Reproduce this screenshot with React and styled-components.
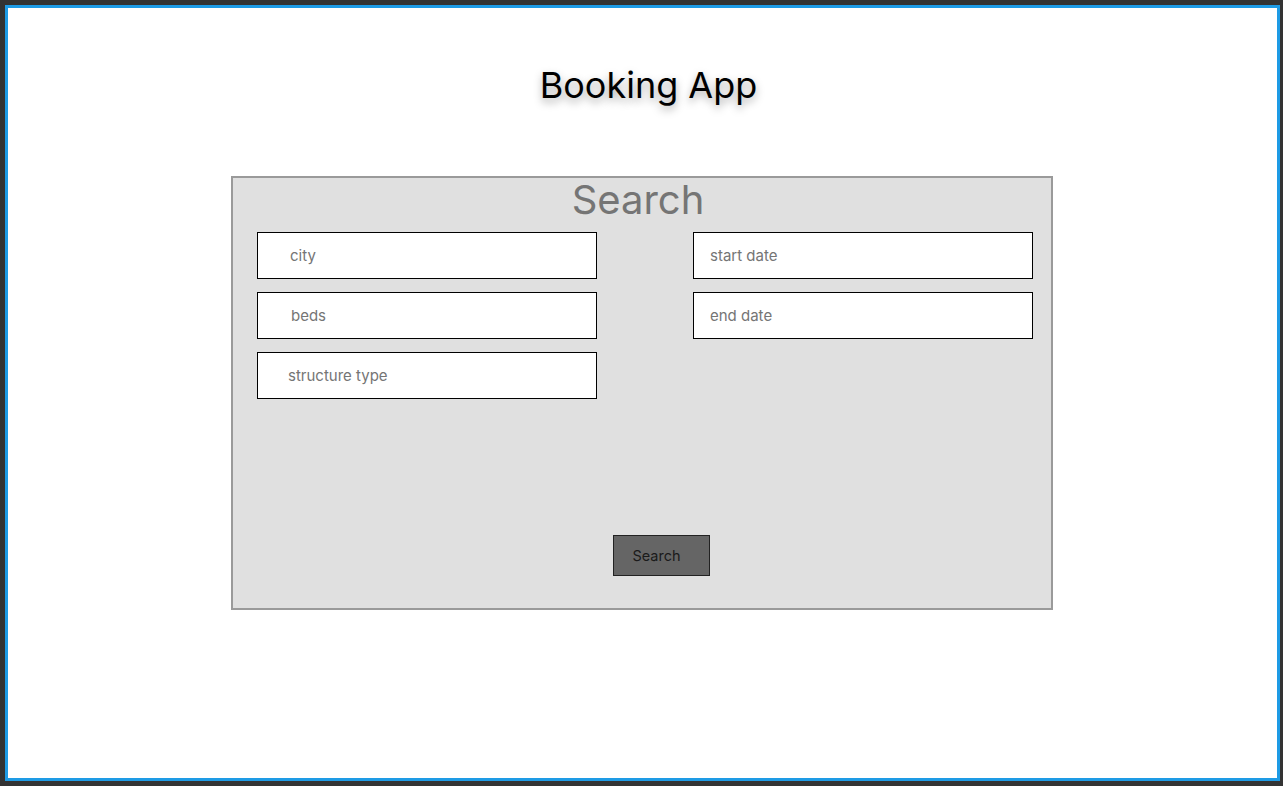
import React from "react";
import styled, { createGlobalStyle } from "styled-components";

const Global = createGlobalStyle`
  html, body { margin: 0; padding: 0; background: #333333; }
  * { box-sizing: border-box; }
`;

const Frame = styled.div`
  margin: 5px 3px 5px 5px;
  height: 776px;
  border: 3px solid #1e9be5;
  background: #ffffff;
  display: flex;
  flex-direction: column;
  align-items: center;
  font-family: Inter, "Noto Sans", sans-serif;
`;

const Title = styled.h1`
  margin: 55px 0 0 12px;
  font-size: 36px;
  line-height: 44px;
  font-weight: 400;
  color: #000;
  text-shadow: 0 4px 8px rgba(0, 0, 0, 0.35);
`;

const Panel = styled.section`
  margin: 69px 1px 0 0;
  width: 822px;
  height: 434px;
  border: 2px solid #9a9a9a;
  background: #e0e0e0;
  display: flex;
  flex-direction: column;
`;

const PanelTitle = styled.h2`
  margin: 0 0 0 -8px;
  text-align: center;
  font-size: 40px;
  line-height: 44px;
  font-weight: 400;
  color: #757575;
`;

const Grid = styled.div`
  margin-top: 10px;
  padding-left: 24px;
  display: grid;
  grid-template-columns: 340px 340px;
  grid-auto-rows: 47px;
  column-gap: 96px;
  row-gap: 13px;
`;

const Field = styled.input`
  width: 100%;
  height: 47px;
  border: 1px solid #000;
  background: #fff;
  padding: 0 0 0 ${(p) => p.$pad}px;
  font-family: Inter, "Noto Sans", sans-serif;
  font-size: 15px;
  color: #333;
  outline: none;
  grid-column: ${(p) => p.$col};
  &::placeholder { color: #757575; }
`;

const ButtonRow = styled.div`
  margin-top: auto;
  padding: 0 0 32px 39px;
  display: flex;
  justify-content: center;
`;

const Button = styled.button`
  height: 41px;
  width: 97px;
  padding: 0 10px 0 0;
  border: 1px solid #222;
  background: #656565;
  color: #1a1a1a;
  font-family: Inter, "Noto Sans", sans-serif;
  font-size: 14.5px;
`;

export default function App() {
  return (
    <>
      <Global />
      <Frame>
        <Title>Booking App</Title>
        <Panel>
          <PanelTitle>Search</PanelTitle>
          <Grid>
            <Field $col={1} $pad={32} placeholder="city" />
            <Field $col={2} $pad={16} placeholder="start date" />
            <Field $col={1} $pad={33} placeholder="beds" />
            <Field $col={2} $pad={16} placeholder="end date" />
            <Field $col={1} $pad={30} placeholder="structure type" />
          </Grid>
          <ButtonRow>
            <Button>Search</Button>
          </ButtonRow>
        </Panel>
      </Frame>
    </>
  );
}
